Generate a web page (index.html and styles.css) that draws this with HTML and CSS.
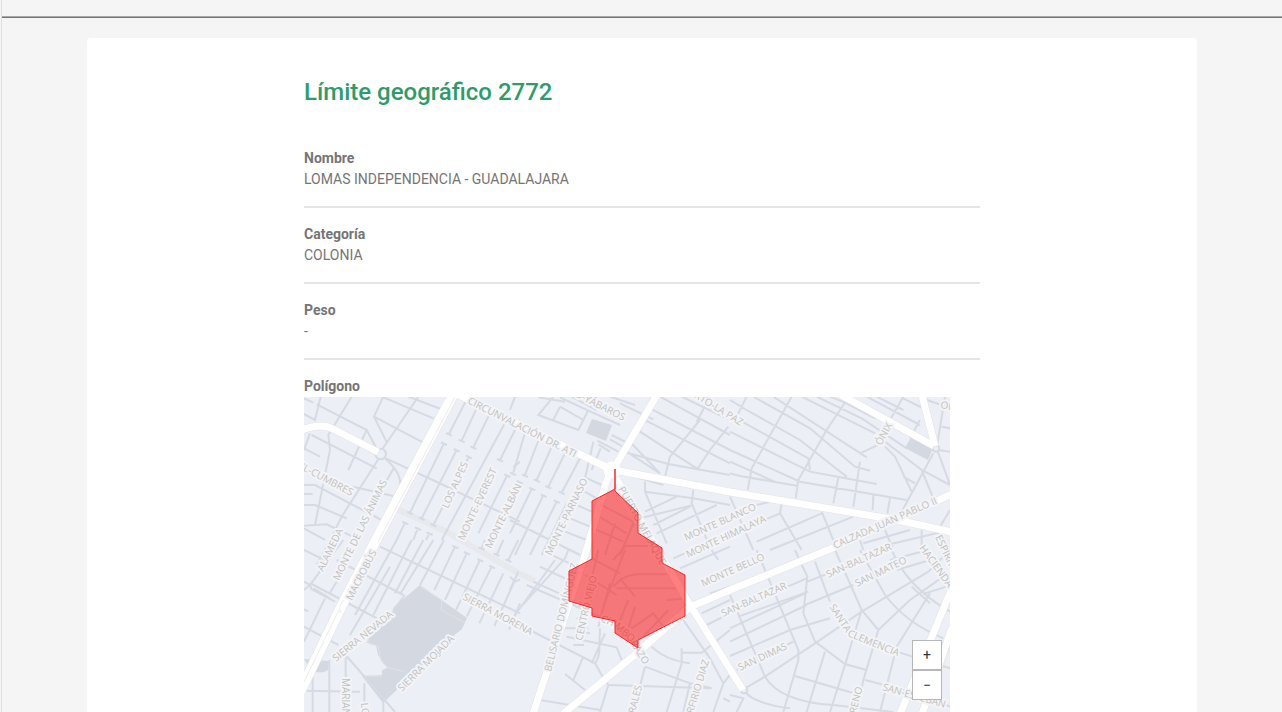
FILE: index.html
```html
<!DOCTYPE html>
<html lang="es">
<head>
<meta charset="utf-8">
<title>Límite geográfico 2772</title>
<link rel="stylesheet" href="styles.css">
</head>
<body>
<div class="shell">
<header class="topbar"></header>
<main class="content">
<article class="card">
<div class="details">
<h1 class="title">Límite geográfico 2772</h1>
<dl class="fields">
<div class="field"><dt>Nombre</dt><dd>LOMAS INDEPENDENCIA - GUADALAJARA</dd></div>
<div class="field"><dt>Categoría</dt><dd>COLONIA</dd></div>
<div class="field"><dt>Peso</dt><dd>-</dd></div>
<div class="field field-map"><dt>Polígono</dt>
<dd class="map">
<svg class="map-canvas" viewBox="304 397 646 400" preserveAspectRatio="xMidYMin slice" role="img" aria-label="Mapa del polígono">
<g class="blocks">
<path d="M420 585 L467 618 L462 629 L452 637 L383 703 L362 676 L382 675 L382 670 L387 668 L378 655 L376 645 L367 643 L370 630 Q388 627 394 607Z"/>
<path d="M592 419 L612 425 L606 441 L586 433Z"/>
<path d="M911 437 L933 448 L928 460 L905 448Z"/>
<path d="M304 659 L329 661 L328 670 Q320 675 311 670Z"/>
</g>
<g class="path-way">
<path d="M397 509 L447 532 L520 574 L535 581"/>
<path d="M421 587 L442 600 L441 610 L465 623 M367 635 L370 644 L378 646 L381 661 L387 667 L405 672 M362 676 H382"/>
</g>
<g class="streets">
<g transform="translate(300 370) scale(.33333)">
<path d="M62 80 L45 150 L12 132 M50 103 L200 180 L145 300 M200 180 L232 240 M155 80 L85 195 L90 240 L45 465 M12 85 L40 98 M30 190 L12 240 M35 195 L230 295 M12 235 L60 260 M250 80 L222 140 L262 220 M222 140 L370 218 M245 80 L400 145 M325 80 L430 120 M355 80 L245 240 M235 268 L125 440 L90 510 M255 265 Q305 310 300 345 M283 290 L250 350 M258 265 L430 345 L660 455 M12 345 H45 L245 450 M12 372 H38 M12 405 H45 L140 445 M12 467 L80 463 L180 510 M12 475 L75 510 M160 350 L280 378"/>
<path d="M500 88 L447 192 M538 98 L485 212 M577 115 L520 232 M625 140 L425 510 M660 150 L600 270 M432 220 L330 428 M470 240 L365 445 M507 260 L400 465 M622 315 L535 490 M315 458 L290 510 M353 475 L340 510 M388 490 L378 510 M438 189 l18 8 M476 209 l18 8 M511 229 l18 8 M591 267 l18 8 M423 217 l18 8 M461 237 l18 8 M498 257 l18 8 M613 313 l18 8 M321 425 l18 8 M356 442 l18 8 M391 462 l18 8 M307 455 l18 8 M345 472 l18 8 M380 487 l18 8 M660 275 L640 292"/>
<circle cx="242" cy="252" r="16"/>
</g>
<g transform="translate(300 540) scale(.33333)">
<path d="M130 0 L30 135 L35 148 L105 185 M35 132 L240 240 M40 145 L90 175 M12 125 L30 135 L12 150 M12 30 L90 68 M110 60 L310 165 M240 20 L660 220 M290 0 L165 225 M270 80 L150 285 M335 0 L220 225 M370 0 L285 160 M315 165 L280 210 M400 0 L302 160 M432 0 L360 135 M465 20 L403 150 M500 40 L435 180 M540 60 L468 210 M575 80 L500 230 M610 100 L538 250 M645 120 L583 258 M660 190 L627 268 M75 175 L12 305 M12 260 L115 315 M12 208 L25 214 M137 345 V516 M137 345 L285 516 M88 360 V516 M12 452 L180 455 M38 410 V516 M193 430 V516 M250 485 V516 M50 75 L90 0 M90 158 L110 125"/>
<path d="M457 17 l18 8 M492 36 l18 8 M532 57 l18 8 M567 77 l18 8 M545 25 L555 0 M590 45 L610 0 M625 60 L655 0 M536 22 l18 8 M580 40 l18 8 M616 58 l18 8"/>
</g>
<g transform="translate(510 390) scale(.33333)">
<path d="M15 20 L0 60 M0 110 L15 115 M130 20 L85 75 L205 120 L235 60 M150 22 L235 62 L330 105 M85 22 L165 35 M150 50 L220 90 M185 20 L260 60 M255 50 L265 40 M300 20 L375 45 M330 40 L430 88 M250 155 L225 265 M272 175 L245 240 M225 262 L275 285 M305 135 L345 155 M300 148 L335 168 M262 152 L325 185 M265 163 L300 185 M150 50 L130 90"/>
<path d="M395 85 L660 220 M375 115 L560 235 M355 150 L450 250 M335 175 L450 250 M420 55 L660 180 M450 20 L660 135 M515 20 L660 90 M570 90 L480 200 L465 260 M600 20 L560 95 M655 110 L600 180 L560 240 M340 185 L475 222 L660 255 M405 275 V305 L470 460 M405 305 L550 325 L660 345 M550 300 L545 340 L595 460 M405 365 L500 320 M390 385 L550 345 M430 405 L540 350 M340 250 L460 285 M440 430 L620 345"/>
<path d="M50 110 L10 248 M90 140 L45 255 M130 160 L80 270 M170 180 L115 290 M210 205 L155 308 M0 248 l18 8 M36 253 l18 8 M71 268 l18 8 M106 288 l18 8 M146 305 l18 8 M28 275 L0 330 M66 295 L0 430 M100 315 L15 495 M140 335 L60 495 M170 340 L95 495 M20 273 l18 8 M58 293 l18 8 M92 313 l18 8 M131 331 l18 8 M0 390 L210 495 M215 300 L260 325 M200 345 L245 365 M180 385 L240 410 M165 425 L230 450 M265 340 L370 395 M260 375 L350 430 M250 415 L340 455 M315 400 L285 495 M370 400 L330 495 M345 468 H425"/>
</g>
<g transform="translate(510 550) scale(.33333)">
<path d="M175 0 L165 25 L15 190 M135 30 L15 195 M50 105 L270 200 M70 95 L180 145 M90 50 L175 90 M115 10 L200 50 M25 65 L0 120 M65 243 L255 340 L275 375 L295 405 L605 415 M165 235 H235 M170 260 L320 292 L335 330 M190 285 H222 M220 320 L190 390 M165 372 L225 420 M295 405 L270 486 M90 450 L270 480 M255 340 Q270 320 268 285 L270 235 M245 25 L330 70 M225 75 L320 135 M265 0 L245 85 M345 0 L280 170 M310 30 L345 -10 M310 110 Q340 75 380 73 H485 M320 115 H520 M330 85 L375 140 M470 150 L535 145 M355 150 L320 235 M375 170 L355 235 M300 100 L265 230 M365 235 L430 190 L460 230 M475 180 L400 260 M425 290 Q465 330 540 340 M515 295 V340 L470 486 M515 308 H575 L660 240 M520 210 L600 325 L640 400 L610 486 M405 350 L540 400 L605 415 M405 350 L370 486 M540 400 L520 486 M640 400 L660 375 M600 130 L660 110 M575 190 L660 150 M590 225 L660 190 M605 0 L625 30 M490 25 L660 -50 M510 55 L660 -10 M640 445 L660 455 M285 250 L245 340"/>
<path d="M235 215 L200 205 M240 250 L205 245 M0 80 L15 95 L30 88"/>
</g>
<g transform="translate(730 390) scale(.33333)">
<path d="M50 20 L20 80 M185 20 L65 235 L53 300 M350 30 L290 120 L205 270 L197 325 M0 30 L50 60 L210 150 L350 260 M70 20 L240 115 L375 230 L420 242 M0 75 L235 205 L240 240 M0 125 L130 190 L240 245 L440 282 M0 180 L210 275 L530 330 M0 215 L140 278 M0 250 L30 258 L205 288 M130 20 L410 202 M215 20 L435 130 M260 20 L395 85 L530 175 M300 20 L345 38 L435 85 M390 190 L465 155 L575 240 L660 285 M410 20 L570 105 M520 20 L480 90 M520 25 L590 60 M440 20 L520 60 M570 90 L540 145 M645 20 L620 175 L660 285 M590 30 L635 45 M635 110 L660 115 M625 180 L660 185 M610 190 L515 365 M575 240 L610 325 M465 170 L495 200 L545 305 M520 260 L555 280 M390 215 L370 350 M325 262 L310 340 M430 315 L428 360 M480 325 L472 370"/>
<path d="M155 340 L150 370 L215 480 M0 320 L70 480 M150 370 L80 400 M275 365 L320 475 M275 370 L80 455 M370 380 L120 480 M465 420 L490 480 M390 450 L400 480 M575 420 V480 M660 360 L630 410 L640 480 M400 460 L540 420 M80 345 L120 335 M430 475 L660 420"/>
<circle cx="618" cy="175" r="10"/>
</g>
<g transform="translate(730 550) scale(.33333)">
<path d="M0 135 L105 380 Q150 455 310 465 L490 486 M80 0 L205 300 L205 330 L160 486 M195 0 L232 80 L220 190 L255 275 L345 342 L410 360 M255 35 L300 155 M315 0 L395 180 L445 240 M390 0 L465 135 Q530 220 640 265 M485 0 Q530 110 660 185 M25 200 L235 125 M0 235 L225 130 M0 275 L230 165 M0 318 L180 240 L300 205 M0 185 L230 85 M20 360 L190 275 M45 415 L105 380 L255 280 L395 185 L595 65 L660 0 M232 95 L320 60 M225 165 L370 105 M480 30 L595 0 M500 60 L600 30 M395 180 L345 345 L300 486 M445 240 L540 150 L640 80 M445 240 L400 390 L380 486 M500 290 L600 130 M500 290 L450 486 M285 305 L230 486 M195 378 L390 435 M405 390 L560 430 L660 470 M500 305 L660 355 M545 110 L600 160 M0 435 L40 445 L20 486 M45 425 Q70 460 180 475 M585 130 L650 110"/>
<circle cx="42" cy="420" r="10"/>
</g>
</g>
<g class="roads-edge">
<path class="avenue" d="M453 395 L376 540 L342 605 L300 692"/>
<path d="M300 431 Q320 422 333 429 L378 452 M455 393 L510 420 L612 470 M657 395 L614 468 M614 470 L730 492 L897 520 L952 532 M612 470 Q606 480 604 490 L585 555 L533 714 M616 478 L690 605 L743 690 M563 714 L637 653 L690 607 L735 588 L840 545 L952 494 M841 395 L934 446 M922 395 L935 446 M952 588 L900 714 M952 628 L922 714"/>
</g>
<g class="roads">
<path class="avenue" d="M453 395 L376 540 L342 605 L300 692"/>
<path d="M300 431 Q320 422 333 429 L378 452 M455 393 L510 420 L612 470 M657 395 L614 468 M614 470 L730 492 L897 520 L952 532 M612 470 Q606 480 604 490 L585 555 L533 714 M616 478 L690 605 L743 690 M563 714 L637 653 L690 607 L735 588 L840 545 L952 494 M841 395 L934 446 M922 395 L935 446 M952 588 L900 714 M952 628 L922 714"/>
<circle cx="612" cy="470" r="5"/>
</g>
<path class="median" d="M455 397 L378 542 M344 600 Q337 608 341 613 M339 610 L300 690"/>
<g class="labels">
<text transform="translate(467 403) rotate(27)">CIRCUNVALACIÓN DR. ATI</text>
<text transform="translate(574 396) rotate(27)">O-YÁBAROS</text>
<text transform="translate(689 394) rotate(32)">ERTO-LA PAZ</text>
<text transform="translate(881 446) rotate(-61)">ÓNIX</text>
<text transform="translate(940 408) rotate(10)">OLIVO</text>
<text transform="translate(300 469) rotate(28)">IL-CUMBRES</text>
<text transform="translate(448 509) rotate(-66)">LOS ALPES</text>
<text transform="translate(464 541) rotate(-65)">MONTE-EVEREST</text>
<text transform="translate(491 549) rotate(-64)">MONTE-ALBÁN</text>
<text transform="translate(551 556) rotate(-64)">MONTE-PARNASO</text>
<text transform="translate(339 581) rotate(-64)">MONTE DE LAS ÁNIMAS</text>
<text transform="translate(323 572) rotate(-64)">ALAMEDA</text>
<text transform="translate(352 601) rotate(-63)">MACROBÚS</text>
<text transform="translate(336 662) rotate(-39)">SIERRA NEVADA</text>
<text transform="translate(402 692) rotate(-45)">SIERRA MOJADA</text>
<text transform="translate(462 599) rotate(28)">SIERRA MORENA</text>
<text transform="translate(342 678) rotate(90)">MARIANO</text>
<text transform="translate(361 703) rotate(85)">LOPEZ</text>
<text transform="translate(551 672) rotate(-76)">BELISARIO DOMÍNGUEZ</text>
<text transform="translate(582 641) rotate(-77)">CENTRO VIEJO</text>
<text transform="translate(618 489) rotate(61)">PUERTO MELAQUE</text>
<text transform="translate(600 621) rotate(24)">CHI</text>
<text transform="translate(614 627) rotate(42)">MBO</text>
<text transform="translate(630 643) rotate(58)">RAZO</text>
<text transform="translate(635 714) rotate(-76)">RALES</text>
<text transform="translate(693 714) rotate(-73)">RFIRIO DIAZ</text>
<text transform="translate(686 541) rotate(-24)">MONTE BLANCO</text>
<text transform="translate(688 558) rotate(-25)">MONTE HIMALAYA</text>
<text transform="translate(703 587) rotate(-24)">MONTE BELLO</text>
<text transform="translate(723 617) rotate(-24)">SAN-BALTAZAR</text>
<text transform="translate(740 671) rotate(-25)">SAN DIMAS</text>
<text transform="translate(835 549) rotate(-24)">CALZADA JUAN PABLO II</text>
<text transform="translate(828 578) rotate(-24)">SAN-BALTAZAR</text>
<text transform="translate(857 587) rotate(-26)">SAN MATEO</text>
<text transform="translate(829 607) rotate(57)">SANTA</text>
<text transform="translate(847 636) rotate(22)">CLEMENCIA</text>
<text transform="translate(919 548) rotate(54)">HACIENDA</text>
<text transform="translate(935 537) rotate(65)">ESPIRITU</text>
<text transform="translate(882 690) rotate(16)">SAN-ESTEBAN</text>
<text transform="translate(856 714) rotate(-76)">RENO</text>
</g>
<path class="zone" d="M615 469 V489 L592 501 V559 L569 571 V601 L592 608 V616 L615 621 V633 L638 648 V640 L685 616 V575 L662 563 V548 L638 533 V513 L615 491Z"/>
</svg>
<div class="zoom">
<button type="button" aria-label="Acercar">+</button>
<button type="button" aria-label="Alejar">−</button>
</div>
</dd></div>
</dl>
</div>
</article>
</main>
</div>
</body>
</html>
```
FILE: styles.css
```css
* { box-sizing: border-box; }
body {
  margin: 0;
  background: #f5f5f5;
  color: #757575;
  font: 14px/21px Roboto, sans-serif;
}
.shell {
  display: flex;
  flex-direction: column;
  height: 100vh;
  overflow: hidden;
  margin-left: 1px;
  border-left: 1px solid #e0e0e0;
}
.topbar {
  flex: none;
  height: 18px;
  border-bottom: 1px solid #2d9c6b;
  box-shadow: inset 0 -1px #a9a9a9;
}
.content {
  flex: 1;
  min-height: 0;
  padding: 20px 85px 0;
}
.card {
  background: #fff;
  border-radius: 4px;
  padding: 36px 24px 40px;
}
.details {
  max-width: 676px;
  margin: 0 auto;
}
.title {
  margin: 0 0 38px;
  color: #2d9c6b;
  font-size: 24px;
  font-weight: 500;
  line-height: 36px;
}
.fields { margin: 0; }
.field {
  padding-bottom: 16px;
  margin-bottom: 16px;
  border-bottom: 2px solid #e5e5e5;
}
.field dt { font-weight: 700; }
.field dd { margin: 0; }
.field-map { border-bottom: 0; }
.field .map {
  position: relative;
  height: 400px;
  margin-right: 30px;
  overflow: hidden;
  background: #eceff5;
}
.map-canvas {
  display: block;
  width: 100%;
  height: 100%;
  fill: none;
}
.blocks { fill: #d4d8e1; }
.path-way { stroke: #e2e2e4; stroke-width: 1; }
.path-way path:first-child { stroke-width: 6; stroke: #e7e9ed; }
.streets { stroke: #d6dae3; }
.streets path, .streets circle {
  stroke-width: 2px;
  vector-effect: non-scaling-stroke;
}
.streets circle { fill: #eceff5; }
.roads-edge { stroke: #e2e3e6; stroke-width: 8; stroke-linejoin: round; }
.roads { stroke: #fff; stroke-width: 7; stroke-linejoin: round; }
.roads-edge .avenue { stroke-width: 11; }
.roads .avenue { stroke-width: 10; }
.median { stroke: #ececee; stroke-width: 1; }
.labels {
  fill: #c0c0c0;
  stroke: #f3f4f7;
  stroke-width: 4px;
  stroke-linejoin: round;
  paint-order: stroke;
  font: 10px "Open Sans", "Noto Sans", sans-serif;
}
.zone {
  fill: rgba(255, 0, 0, .5);
  stroke: #f22;
  stroke-width: 1;
}
.zoom {
  position: absolute;
  top: 243px;
  right: 8px;
  display: flex;
  flex-direction: column;
}
.zoom button {
  width: 30px;
  height: 30px;
  padding: 0;
  border: 1px solid #b7b7b7;
  background: #fff;
  color: #333;
  font: 14px/28px Roboto, sans-serif;
}
```
